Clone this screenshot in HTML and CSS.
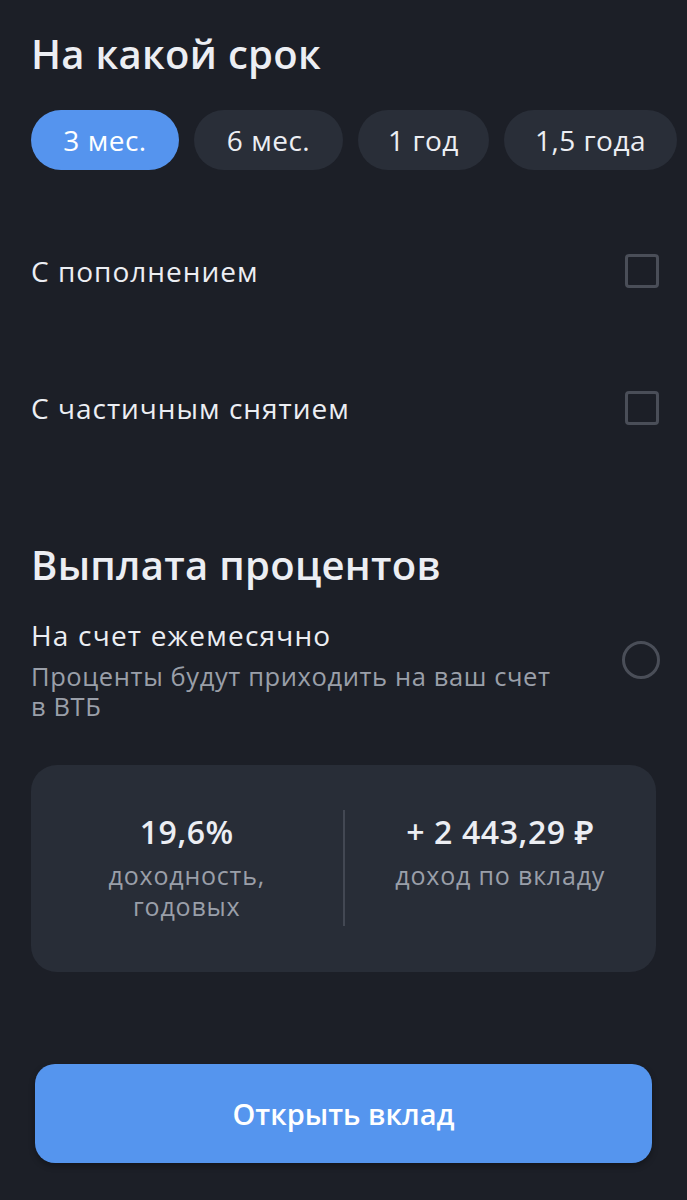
FILE: index.html
```html
<!DOCTYPE html>
<html lang="ru">
<head>
<meta charset="utf-8">
<link rel="stylesheet" href="styles.css">
</head>
<body>
<main class="page">
  <h1 class="title">На какой срок</h1>
  <div class="chips">
    <button class="chip chip-active">3 мес.</button>
    <button class="chip">6 мес.</button>
    <button class="chip">1 год</button>
    <button class="chip">1,5 года</button>
  </div>

  <div class="option option-first">
    <span class="option-label">С пополнением</span>
    <span class="checkbox"></span>
  </div>
  <div class="option">
    <span class="option-label">С частичным снятием</span>
    <span class="checkbox"></span>
  </div>

  <h2 class="title title-second">Выплата процентов</h2>
  <div class="payout">
    <div class="payout-text">
      <div class="payout-label">На счет ежемесячно</div>
      <div class="payout-desc">Проценты будут приходить на ваш счет в&nbsp;ВТБ</div>
    </div>
    <span class="radio"></span>
  </div>

  <div class="summary">
    <div class="summary-col">
      <div class="summary-value">19,6%</div>
      <div class="summary-caption">доходность,<br>годовых</div>
    </div>
    <div class="summary-divider"></div>
    <div class="summary-col">
      <div class="summary-value">+ 2 443,29 ₽</div>
      <div class="summary-caption">доход по вкладу</div>
    </div>
  </div>

  <button class="open-btn">Открыть вклад</button>
</main>
</body>
</html>
```

FILE: styles.css
```css
* { box-sizing: border-box; }
html, body {
  margin: 0;
  background: #1c1f27;
}
body {
  font-family: "Open Sans", "Noto Sans", sans-serif;
  color: #eceef3;
}
.page {
  width: 687px;
  height: 1200px;
  padding: 28px 31px 0 31px;
  display: flex;
  flex-direction: column;
  overflow: hidden;
}
.title {
  margin: 0;
  font-size: 40px;
  font-weight: 600;
  line-height: 52px;
  letter-spacing: 0.3px;
  color: #eceef3;
}
.chips {
  display: flex;
  gap: 15px;
  margin-top: 30px;
  margin-right: -31px;
}
.chip {
  height: 60px;
  border: none;
  border-radius: 30px;
  background: #292e38;
  color: #eceef3;
  font-family: inherit;
  font-size: 28px;
  font-weight: 500;
  letter-spacing: 0.5px;
  padding: 0;
  flex: 0 0 auto;
}
.chip:nth-child(1) { width: 148px; }
.chip:nth-child(2) { width: 149px; }
.chip:nth-child(3) { width: 131px; }
.chip:nth-child(4) { width: 173px; }
.chip-active {
  background: #5594ee;
  color: #ffffff;
}
.option {
  display: flex;
  align-items: center;
  justify-content: space-between;
  height: 34px;
  margin-top: 103px;
}
.option-first { margin-top: 84px; }
.option-label {
  font-size: 28px;
  line-height: 34px;
  letter-spacing: 1px;
  color: #eceef3;
}
.checkbox {
  width: 34px;
  height: 34px;
  border: 3px solid #4a4e58;
  border-radius: 4px;
  margin-right: -3px;
}
.title-second {
  margin-top: 114px;
}
.payout {
  display: flex;
  align-items: center;
  justify-content: space-between;
  margin-top: 24px;
}
.payout-text {
  width: 555px;
}
.payout-label {
  font-size: 28px;
  line-height: 40px;
  letter-spacing: 1.2px;
  color: #eceef3;
}
.payout-desc {
  margin-top: 6px;
  font-size: 25.5px;
  line-height: 30px;
  letter-spacing: 0.6px;
  color: #9a9fa9;
}
.radio {
  width: 38px;
  height: 38px;
  border: 3px solid #4a4e58;
  border-radius: 50%;
  margin-right: -4px;
  margin-bottom: 16px;
}
.summary {
  margin-top: 44px;
  height: 207px;
  background: #282d37;
  border-radius: 26px;
  display: flex;
  align-items: flex-start;
  padding-top: 45px;
}
.summary-col {
  flex: 1;
  text-align: center;
}
.summary-value {
  font-size: 32px;
  font-weight: 600;
  line-height: 44px;
  letter-spacing: 0.6px;
  color: #eceef3;
}
.summary-caption {
  margin-top: 6px;
  font-size: 25px;
  line-height: 31px;
  letter-spacing: 0.8px;
  color: #9a9fa9;
}
.summary-divider {
  width: 2px;
  height: 116px;
  background: #434853;
}
.open-btn {
  margin-top: 92px;
  margin-left: 4px;
  width: 617px;
  height: 99px;
  border: none;
  border-radius: 20px;
  background: #5595ee;
  color: #ffffff;
  font-family: inherit;
  font-size: 29px;
  font-weight: 600;
  box-shadow: 0 3px 6px rgba(0,0,0,0.3);
}
```
